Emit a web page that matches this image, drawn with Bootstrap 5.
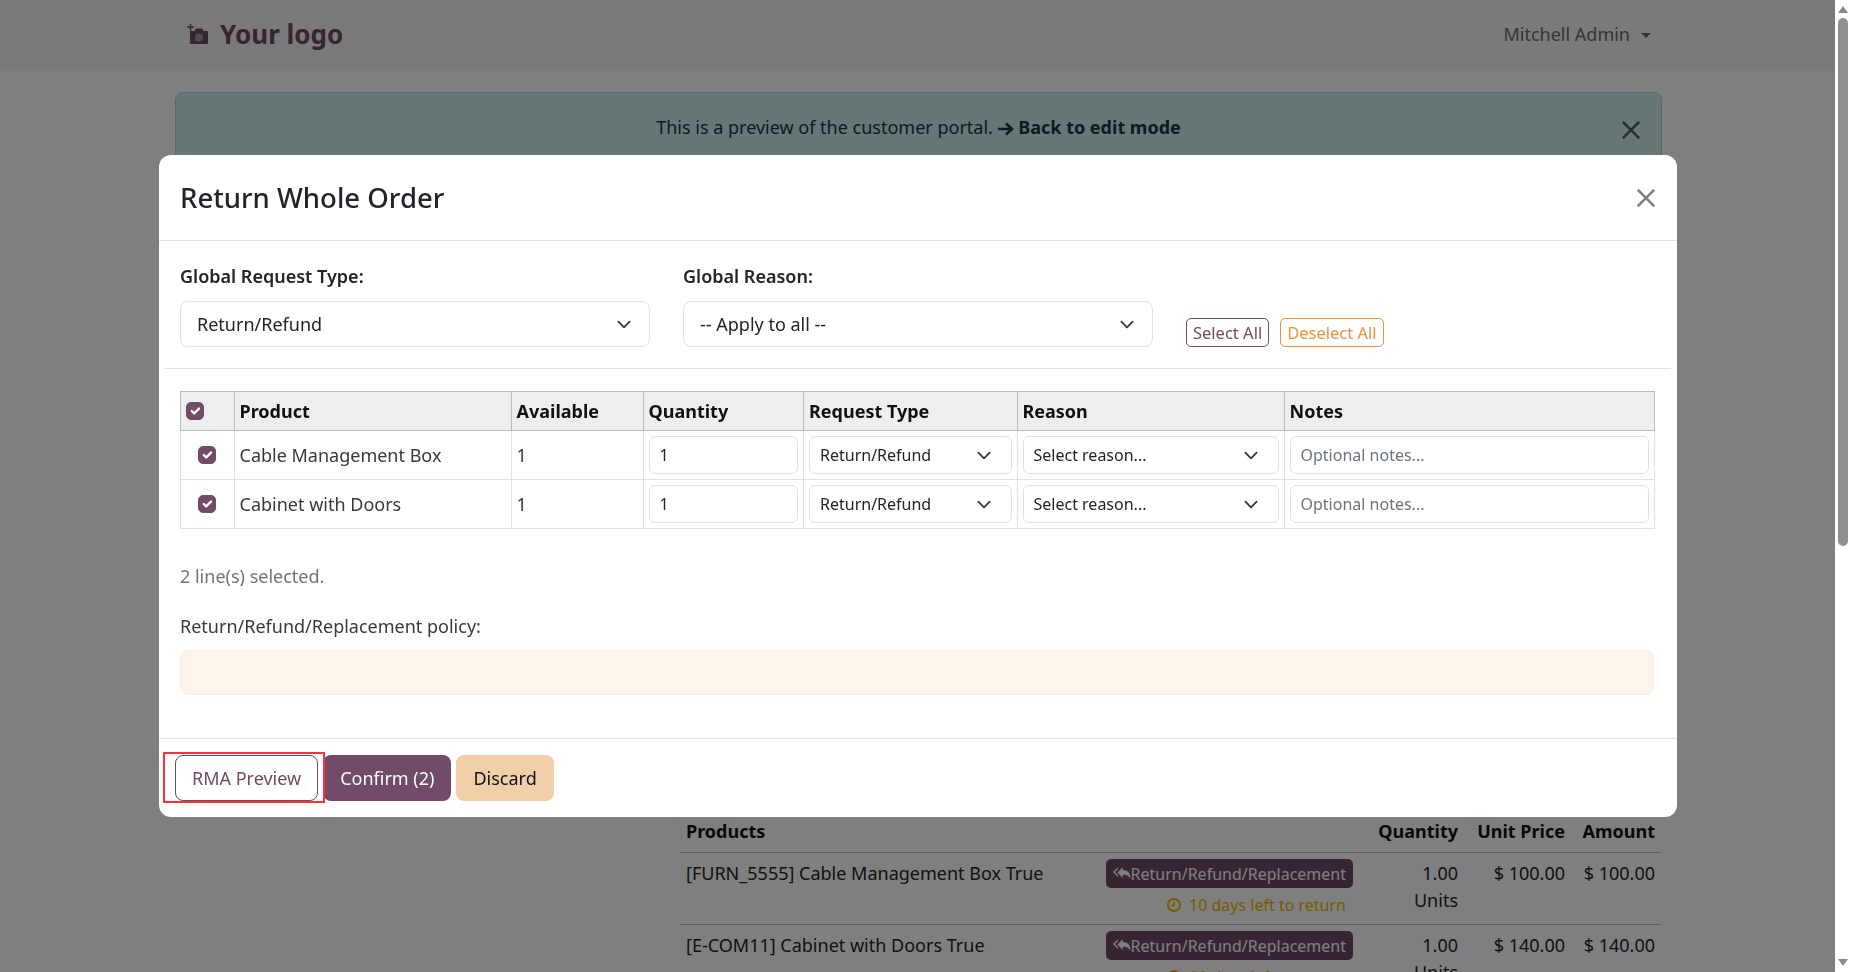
<!DOCTYPE html>
<html lang="en">

<head>
    <meta charset="UTF-8">
    <meta name="viewport" content="width=device-width, initial-scale=1.0">
    <title>Return Whole Order</title>
    <link rel="stylesheet" href="https://cdn.jsdelivr.net/npm/bootstrap@5.3.3/dist/css/bootstrap.min.css">
    <script src="https://cdn.jsdelivr.net/npm/bootstrap@5.3.3/dist/js/bootstrap.bundle.min.js"></script>
    <style>
        html, body { height: 972px; overflow: hidden; }
        body { font-family: "Noto Sans", "Open Sans", sans-serif; font-size: 18px; color: #212529; background: #fff; }

        /* page behind the dialog */
        .page-area { width: 1835px; height: 972px; overflow: hidden; flex: none; position: relative; }
        .top-bar { height: 71px; background: #f4f4f4; padding: 0 184px 2px 175px; }
        .logo-box { width: 183px; height: 50px; gap: 11px; padding-left: 12px; color: #714B67; font-size: 26px; font-weight: 700;
            background: repeating-linear-gradient(135deg, transparent 0 12px, rgba(0,0,0,.025) 12px 13px); }
        .user-menu { color: #6b6b6b; font-size: 18px; }
        .user-menu::after { margin-left: 11px; vertical-align: 3px; }
        .preview-alert { margin: 21px 173px 0 175px; height: 100px; padding-top: 21px; background: #cfeded; border: 1px solid #a9d3d3; border-radius: 8px; color: #0e3a45; }
        .preview-alert b { font-weight: 700; }
        .preview-alert .btn-close { position: absolute; top: 27px; right: 20px; width: 20px; height: 20px; padding: 0; background-size: 20px; opacity: .6; }
        .order-lines { margin: 619px 0 0 680px; width: 981px; table-layout: fixed; --bs-table-bg: transparent; }
        .order-lines th, .order-lines td { padding: 7px 6px; border-color: #c4c4c4; }
        .order-lines th { height: 40px; padding-top: 7px; color: #111; font-weight: 700; }
        .order-lines td { height: 70px; color: #212529; }
        .return-tag { background: #714B67; color: #fff; border-radius: 5px; height: 29px; width: 247px; font-size: 16px; padding: 0 7px; margin-right: 13px; margin-top: -1px; }
        .days-left { color: #f0b400; font-size: 16px; margin-right: 20px; gap: 8px; margin-top: 5px; }

        .fake-scroll { width: 15px; flex: none; height: 972px; background: #fff; position: relative; }
        .fake-scroll .thumb { position: absolute; left: 3px; top: 18px; width: 10px; height: 528px; background: #8f8f8f; border-radius: 5px; }
        .fake-scroll .up { position: absolute; left: 3px; top: 6px; width: 0; height: 0; border: 5px solid transparent; border-top: 0; border-bottom: 7px solid #8a8a8a; }
        .fake-scroll .down { position: absolute; left: 3px; bottom: 6px; width: 0; height: 0; border: 5px solid transparent; border-bottom: 0; border-top: 7px solid #8a8a8a; }

        /* dialog */
        .modal-backdrop { width: 1835px; height: 972px; }
        .modal { width: 1835px; height: 972px; overflow: hidden; }
        .modal-dialog { max-width: 1518px; width: 1518px; margin: 155px 0 0 159px; }
        .modal-content { border: 0; border-radius: 12px; height: 662px; }
        .modal-header { height: 86px; padding: 0 21px; border-color: #dee2e6; }
        .modal-title { font-size: 27.5px; font-weight: 500; }
        .modal-header .btn-close { width: 20px; height: 20px; padding: 0; margin: 0; background-size: 20px; }
        .modal-body { padding: 0; }
        .global-row { height: 128px; margin: 0 6px; padding: 23px 15px 0 15px; border-bottom: 1px solid #dee2e6; gap: 33px; }
        .global-col { width: 470px; }
        .global-col label { font-weight: 600; display: block; margin-bottom: 13px; line-height: 24px; }
        .global-col .form-select { height: 46px; padding-left: 16px; font-size: 18px; border-radius: 8px; background-size: 20px 15px; background-position: right 15px center; }
        .mini-btn { height: 29px; font-size: 16.500px; padding: 0 6px; border-radius: 5px; background: #fff; line-height: 27px; }
        .mini-dark { color: #714B67; border: 1px solid #714B67; }
        .mini-orange { color: #e8923a; border: 1px solid #e8923a; }
        .lines-wrap { padding: 22px 23px 0 21px; }
        .rma-lines { table-layout: fixed; width: 1474px; margin: 0; --bs-table-bg: transparent; font-size: 18px; }
        .rma-lines thead th { background: #eee; border-color: #bcbcbc; border-width: 1px; height: 39px; padding: 0 5px; vertical-align: middle; font-weight: 700; color: #111; }
        .rma-lines tbody td { border-color: #dee2e6; height: 49px; padding: 0 5px; vertical-align: middle; color: #343a40; }
        .rma-lines .form-check-input { width: 18px; height: 18px; margin: 0; border-radius: 5px; display: block; background-color: #714B67; border-color: #714B67; }
        .rma-lines tbody .form-check-input { margin: 0 auto; }
        .rma-lines .form-control, .rma-lines .form-select { height: 38px; font-size: 16px; border-radius: 6px; padding-left: 10px; min-height: 0; }
        .rma-lines .form-select { background-size: 20px 15px; background-position: right 17px center; }
        .rma-lines .form-control::placeholder { color: #6c757d; }
        .selected-count { color: #6c757d; margin-top: 34px; line-height: 26px; }
        .policy-label { margin-top: 24px; line-height: 26px; color: #343a40; }
        .policy-box { height: 45px; margin-top: 11px; background: #fdf4ec; border: 1px solid #fbeee2; border-radius: 8px; }
        .modal-footer { height: 79px; justify-content: flex-start; padding: 16px; gap: 5px; border-color: #dee2e6; position: relative; align-items: flex-start; }
        .modal-footer > * { margin: 0; }
        .dlg-btn { height: 46px; padding: 0 16px; font-size: 18px; border-radius: 8px; border: 1px solid transparent; }
        .dlg-outline { background: #fff; color: #714B67; border-color: #714B67; }
        .dlg-primary { background: #714B67; color: #fff; }
        .dlg-light { background: #f1cfa9; color: #111; }
        .red-mark { position: absolute; left: 4px; top: 13px; width: 162px; height: 51px; border: 2px solid #f33; pointer-events: none; }
    </style>
</head>

<body class="d-flex">
    <div class="page-area">
        <header class="top-bar d-flex align-items-center justify-content-between">
            <div class="logo-box d-flex align-items-center">
                <svg width="22" height="22" viewBox="0 0 22 22"><path fill="currentColor" d="M5 7h2.500l1.500-2.500h6L16.500 7H20a1 1 0 0 1 1 1v11a1 1 0 0 1-1 1H4a1 1 0 0 1-1-1V8a1 1 0 0 1 2-1z"/><circle cx="12" cy="13.500" r="4" fill="#9a9a9a"/><path stroke="currentColor" stroke-width="1.500" d="M0 3h7M3.500 0v6"/></svg>
                <span>Your logo</span>
            </div>
            <span class="user-menu dropdown-toggle">Mitchell Admin</span>
        </header>
        <div class="preview-alert position-relative text-center">
            This is a preview of the customer portal.
            <svg width="16" height="14" viewBox="0 0 16 14"><path fill="none" stroke="currentColor" stroke-width="2.600" d="M0 7h13M8 1.500 14 7l-6 5.500"/></svg>
            <b>Back to edit mode</b>
            <button type="button" class="btn-close"></button>
        </div>
        <table class="table order-lines">
            <colgroup><col style="width:692px"><col style="width:92px"><col style="width:107px"><col style="width:90px"></colgroup>
            <thead>
                <tr><th>Products</th><th class="text-end">Quantity</th><th class="text-end">Unit Price</th><th class="text-end">Amount</th></tr>
            </thead>
            <tbody id="orderRows"></tbody>
        </table>
    </div>
    <div class="fake-scroll"><span class="up"></span><span class="thumb"></span><span class="down"></span></div>

    <div class="modal-backdrop show"></div>
    <div class="modal d-block">
        <div class="modal-dialog">
            <div class="modal-content">
                <div class="modal-header">
                    <h5 class="modal-title">Return Whole Order</h5>
                    <button type="button" class="btn-close"></button>
                </div>
                <div class="modal-body">
                    <div class="global-row d-flex">
                        <div class="global-col">
                            <label for="globalType">Global Request Type:</label>
                            <select class="form-select" id="globalType"><option>Return/Refund</option></select>
                        </div>
                        <div class="global-col">
                            <label for="globalReason">Global Reason:</label>
                            <select class="form-select" id="globalReason"><option>-- Apply to all --</option></select>
                        </div>
                        <div class="d-flex align-self-start" style="margin-top:54px;gap:11px">
                            <button type="button" class="btn mini-btn mini-dark">Select All</button>
                            <button type="button" class="btn mini-btn mini-orange">Deselect All</button>
                        </div>
                    </div>
                    <div class="lines-wrap">
                        <table class="table table-bordered rma-lines">
                            <colgroup><col style="width:53.500px"><col style="width:277px"><col style="width:132px"><col style="width:160.500px"><col style="width:213.500px"><col style="width:267px"><col style="width:370px"></colgroup>
                            <thead>
                                <tr>
                                    <th><input class="form-check-input" type="checkbox" checked></th>
                                    <th>Product</th><th>Available</th><th>Quantity</th><th>Request Type</th><th>Reason</th><th>Notes</th>
                                </tr>
                            </thead>
                            <tbody id="rmaRows"></tbody>
                        </table>
                        <div class="selected-count">2 line(s) selected.</div>
                        <div class="policy-label">Return/Refund/Replacement policy:</div>
                        <div class="policy-box"></div>
                    </div>
                </div>
                <div class="modal-footer">
                    <button type="button" class="btn dlg-btn dlg-outline">RMA Preview</button>
                    <button type="button" class="btn dlg-btn dlg-primary">Confirm (2)</button>
                    <button type="button" class="btn dlg-btn dlg-light">Discard</button>
                    <span class="red-mark"></span>
                </div>
            </div>
        </div>
    </div>

    <script>
        const rmaProducts = ['Cable Management Box', 'Cabinet with Doors']
        const orderLines = [
            { name: '[FURN_5555] Cable Management Box True', price: '$ 100.00' },
            { name: '[E-COM11] Cabinet with Doors True', price: '$ 140.00' }
        ]

        document.getElementById('rmaRows').innerHTML = rmaProducts.map(function (name) {
            return `<tr>
                <td><input class="form-check-input" type="checkbox" checked></td>
                <td>${name}</td>
                <td>1</td>
                <td><input class="form-control" type="text" value="1"></td>
                <td><select class="form-select"><option>Return/Refund</option></select></td>
                <td><select class="form-select"><option>Select reason...</option></select></td>
                <td><input class="form-control" type="text" placeholder="Optional notes..."></td>
            </tr>`
        }).join('')

        const replyIcon = '<svg width="18" height="14" viewBox="0 0 18 14"><path fill="currentColor" d="M5 0v2L2 5l3 3v2L0 5zM10 0v3c4 0 8 2 8 9-1.500-3-4-4.500-8-4.500V11L4.500 5.500z"/></svg>'
        const clockIcon = '<svg width="14" height="14" viewBox="0 0 14 14"><circle cx="7" cy="7" r="6" fill="none" stroke="currentColor" stroke-width="2"/><path fill="none" stroke="currentColor" stroke-width="1.500" d="M7 3.500V7.500H4"/></svg>'

        document.getElementById('orderRows').innerHTML = orderLines.map(function (line) {
            return `<tr>
                <td>
                    <div class="d-flex justify-content-between">
                        <span>${line.name}</span>
                        <span class="return-tag d-inline-flex align-items-center">${replyIcon}Return/Refund/Replacement</span>
                    </div>
                    <div class="days-left d-flex justify-content-end align-items-center">${clockIcon}<span>10 days left to return</span></div>
                </td>
                <td class="text-end">1.00 Units</td>
                <td class="text-end">${line.price}</td>
                <td class="text-end">${line.price}</td>
            </tr>`
        }).join('')
    </script>
</body>

</html>
